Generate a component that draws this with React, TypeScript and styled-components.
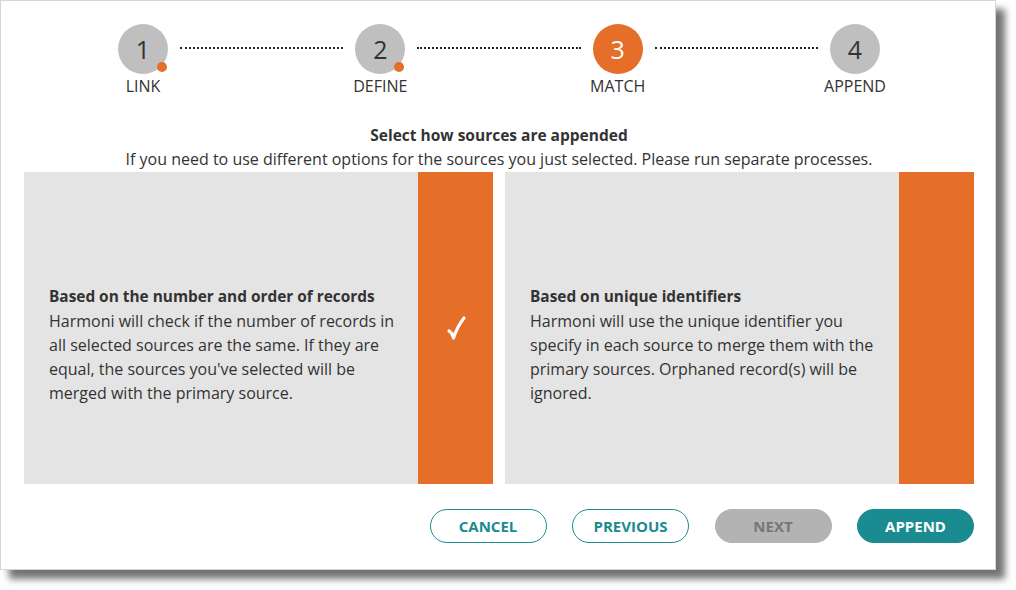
import { Fragment } from "react";
import styled, { createGlobalStyle } from "styled-components";

const GlobalStyle = createGlobalStyle`
  html, body {
    margin: 0;
    padding: 0;
    background: #ffffff;
  }
  body {
    font-family: "Open Sans", "Noto Sans", Arial, sans-serif;
    color: #333333;
  }
`;

const Page = styled.div`
  width: 1016px;
  height: 590px;
`;

const Dialog = styled.div`
  width: 996px;
  height: 570px;
  box-sizing: border-box;
  background: #ffffff;
  border: 1px solid #d6d6d6;
  box-shadow: 9px 9px 7px rgba(0, 0, 0, 0.55);
  padding: 23px 21px 0 23px;
  display: flex;
  flex-direction: column;
`;

const Stepper = styled.div`
  display: flex;
  align-items: flex-start;
  padding: 0 94px;
  height: 76px;
`;

const Step = styled.div`
  width: 50px;
  display: flex;
  flex-direction: column;
  align-items: center;
`;

const Circle = styled.div<{ $active?: boolean }>`
  position: relative;
  width: 50px;
  height: 50px;
  border-radius: 50%;
  background: ${(p) => (p.$active ? "#e56e29" : "#bfbfbf")};
  color: ${(p) => (p.$active ? "#ffffff" : "#333333")};
  display: flex;
  align-items: center;
  justify-content: center;
  font-size: 25px;
  line-height: 1;
`;

const Dot = styled.span`
  position: absolute;
  left: 39px;
  top: 38px;
  width: 10px;
  height: 10px;
  border-radius: 50%;
  background: #e56e29;
`;

const StepLabel = styled.div`
  margin-top: 2px;
  font-size: 16px;
  line-height: 20px;
  white-space: nowrap;
  color: #333333;
`;

const Connector = styled.div`
  flex: 1;
  margin: 23px 12px 0;
  border-top: 2px dotted #222222;
`;

const Heading = styled.div`
  margin-top: 23px;
  text-align: center;
  font-size: 15.5px;
  font-weight: 700;
  line-height: 24px;
`;

const SubHeading = styled.div`
  text-align: center;
  font-size: 16px;
  line-height: 24px;
`;

const Options = styled.div`
  margin-top: 1px;
  display: grid;
  grid-template-columns: 469px 469px;
  gap: 12px;
  height: 312px;
`;

const Option = styled.div`
  display: grid;
  grid-template-columns: 1fr 75px;
  background: #e4e4e4;
`;

const OptionText = styled.div`
  padding: 34px 14px 0 25px;
  display: flex;
  flex-direction: column;
  justify-content: center;
  font-size: 16px;
  line-height: 24px;
`;

const OptionTitle = styled.div`
  font-size: 15.4px;
  font-weight: 700;
`;

const Strip = styled.div`
  background: #e56e29;
  display: flex;
  align-items: center;
  justify-content: center;
`;

const Footer = styled.div`
  margin-top: 25px;
  display: flex;
  justify-content: flex-end;
  gap: 25.5px;
`;

const Button = styled.button<{ $variant: "outline" | "disabled" | "solid" }>`
  width: 117px;
  height: 34px;
  border-radius: 17px;
  box-sizing: border-box;
  font-family: "Open Sans", "Noto Sans", Arial, sans-serif;
  font-size: 15px;
  font-weight: 700;
  padding: 0;
  border: 1px solid
    ${(p) => (p.$variant === "disabled" ? "#b3b3b3" : "#1a8c91")};
  background: ${(p) =>
    p.$variant === "solid" ? "#1a8c91" : p.$variant === "disabled" ? "#b3b3b3" : "#ffffff"};
  color: ${(p) =>
    p.$variant === "solid" ? "#ffffff" : p.$variant === "disabled" ? "#777777" : "#1a8c91"};
`;

const CheckMark = () => (
  <svg width="22" height="26" viewBox="0 0 22 26">
    <path
      d="M4 16 Q7 17.5 8.5 23 Q12.5 11 19 3"
      fill="none"
      stroke="#ffffff"
      strokeWidth="3.2"
      strokeLinecap="round"
      strokeLinejoin="round"
    />
  </svg>
);

const steps = [
  { n: 1, label: "LINK", done: true },
  { n: 2, label: "DEFINE", done: true },
  { n: 3, label: "MATCH", active: true },
  { n: 4, label: "APPEND" },
];

export default function App() {
  return (
    <Page>
      <GlobalStyle />
      <Dialog>
        <Stepper>
          {steps.map((s, i) => (
            <Fragment key={s.n}>
              {i > 0 && <Connector />}
              <Step>
                <Circle $active={s.active}>
                  {s.n}
                  {s.done && <Dot />}
                </Circle>
                <StepLabel>{s.label}</StepLabel>
              </Step>
            </Fragment>
          ))}
        </Stepper>
        <Heading>Select how sources are appended</Heading>
        <SubHeading>
          If you need to use different options for the sources you just selected. Please run
          separate processes.
        </SubHeading>
        <Options>
          <Option>
            <OptionText>
              <OptionTitle>Based on the number and order of records</OptionTitle>
              Harmoni will check if the number of records in all selected sources are the same.
              If they are equal, the sources you've selected will be merged with the primary
              source.
            </OptionText>
            <Strip>
              <CheckMark />
            </Strip>
          </Option>
          <Option>
            <OptionText>
              <OptionTitle>Based on unique identifiers</OptionTitle>
              Harmoni will use the unique identifier you specify in each source to merge them
              with the primary sources. Orphaned record(s) will be ignored.
            </OptionText>
            <Strip />
          </Option>
        </Options>
        <Footer>
          <Button $variant="outline">CANCEL</Button>
          <Button $variant="outline">PREVIOUS</Button>
          <Button $variant="disabled">NEXT</Button>
          <Button $variant="solid">APPEND</Button>
        </Footer>
      </Dialog>
    </Page>
  );
}
